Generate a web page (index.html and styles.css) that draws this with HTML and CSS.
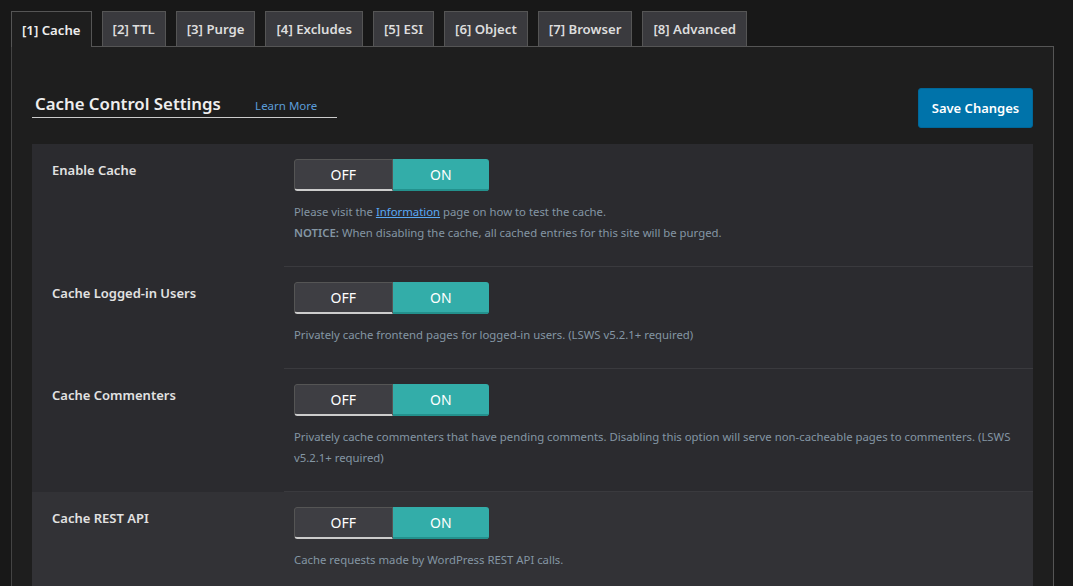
FILE: index.html
```html
<!DOCTYPE html>
<html lang="en">
<head>
  <meta charset="UTF-8">
  <meta name="viewport" content="width=device-width, initial-scale=1.0">
  <title>LiteSpeed Cache - Cache</title>
  <link rel="stylesheet" href="styles.css">
</head>
<body>
  <div class="wrap">
    <nav class="tabs">
      <a class="tab active">[1] Cache</a>
      <a class="tab">[2] TTL</a>
      <a class="tab">[3] Purge</a>
      <a class="tab">[4] Excludes</a>
      <a class="tab">[5] ESI</a>
      <a class="tab">[6] Object</a>
      <a class="tab">[7] Browser</a>
      <a class="tab">[8] Advanced</a>
    </nav>

    <div class="panel">
      <div class="panel-head">
        <h3 class="title">Cache Control Settings <a class="learn">Learn More</a></h3>
        <button class="save">Save Changes</button>
      </div>

      <table class="settings">
        <tr>
          <th>Enable Cache</th>
          <td>
            <div class="toggle"><span class="off">OFF</span><span class="on">ON</span></div>
            <div class="desc">
              Please visit the <a>Information</a> page on how to test the cache.<br>
              <b>NOTICE:</b> When disabling the cache, all cached entries for this site will be purged.
            </div>
          </td>
        </tr>
        <tr>
          <th>Cache Logged-in Users</th>
          <td>
            <div class="toggle"><span class="off">OFF</span><span class="on">ON</span></div>
            <div class="desc">Privately cache frontend pages for logged-in users. (LSWS v5.2.1+ required)</div>
          </td>
        </tr>
        <tr>
          <th>Cache Commenters</th>
          <td>
            <div class="toggle"><span class="off">OFF</span><span class="on">ON</span></div>
            <div class="desc">Privately cache commenters that have pending comments. Disabling this option will serve non-cacheable pages to commenters. (LSWS v5.2.1+ required)</div>
          </td>
        </tr>
        <tr class="hover">
          <th>Cache REST API</th>
          <td>
            <div class="toggle"><span class="off">OFF</span><span class="on">ON</span></div>
            <div class="desc">Cache requests made by WordPress REST API calls.</div>
          </td>
        </tr>
      </table>
    </div>
  </div>
</body>
</html>
```

FILE: styles.css
```css
body {
  margin: 0;
  background-color: #181818;
  color: #ddd;
  font-family: "Noto Sans", "Open Sans", sans-serif;
  overflow: hidden;
}
.wrap {
  padding: 11px 19px 0 11px;
}
.tabs {
  display: flex;
  gap: 10px;
  height: 35px;
}
.tab {
  box-sizing: border-box;
  height: 35px;
  padding: 0 10px;
  display: flex;
  align-items: center;
  font-size: 13.2px;
  font-weight: 600;
  color: #ddd;
  background-color: #3a3a3e;
  border: 1px solid #555;
  border-bottom: none;
}
.tab.active {
  background-color: #1e1e1e;
  height: 36px;
  position: relative;
  z-index: 1;
  color: #eee;
}
.panel {
  background-color: #1e1e1e;
  border-top: 1px solid #555;
  border-left: 1px solid #444;
  border-right: 1px solid #555;
  padding: 41px 20px 0 20px;
  height: 600px;
}
.panel-head {
  display: flex;
  justify-content: space-between;
  align-items: flex-start;
  margin-bottom: 16px;
}
.title {
  margin: 4px 0 0 0;
  width: 302px;
  padding: 0 0 2px 3px;
  font-size: 16.8px;
  font-weight: 600;
  color: #eee;
  border-bottom: 1px solid #ccc;
}
.learn {
  font-size: 11.5px;
  font-weight: 400;
  color: #5b9dd9;
  margin-left: 30px;
}
.save {
  width: 115px;
  height: 40px;
  background-color: #0073aa;
  border: 1px solid #006799;
  border-radius: 3px;
  color: #fff;
  font-family: inherit;
  font-size: 13px;
  font-weight: 600;
  cursor: pointer;
}
.settings {
  width: 100%;
  border-collapse: collapse;
  background-color: #2b2b2f;
}
.settings th {
  width: 212px;
  text-align: left;
  vertical-align: top;
  padding: 17px 20px;
  font-size: 13px;
  font-weight: 600;
  color: #e2e2e2;
}
.settings td {
  vertical-align: top;
  padding: 15px 10px 23px 10px;
  border-bottom: 1px solid #3a3a3e;
}
.settings tr.hover {
  background-color: #323236;
}
.toggle {
  display: flex;
  width: 195px;
  height: 32px;
  border-radius: 3px;
  overflow: hidden;
  font-size: 14px;
  color: #fff;
}
.toggle span {
  flex: 1;
  display: flex;
  align-items: center;
  justify-content: center;
  box-sizing: border-box;
}
.off {
  background-color: #3e3e43;
  border: 1px solid #555;
  border-bottom: 2px solid #ccc;
  border-radius: 3px 0 0 3px;
}
.on {
  background-color: #33ada9;
  border-bottom: 2px solid #23918d;
}
.desc {
  margin-top: 10px;
  font-size: 11.35px;
  line-height: 21px;
  color: #8496a4;
  max-width: 720px;
}
.desc a {
  color: #5aa9f5;
  text-decoration: underline;
}
.desc b {
  font-weight: 600;
}
```
